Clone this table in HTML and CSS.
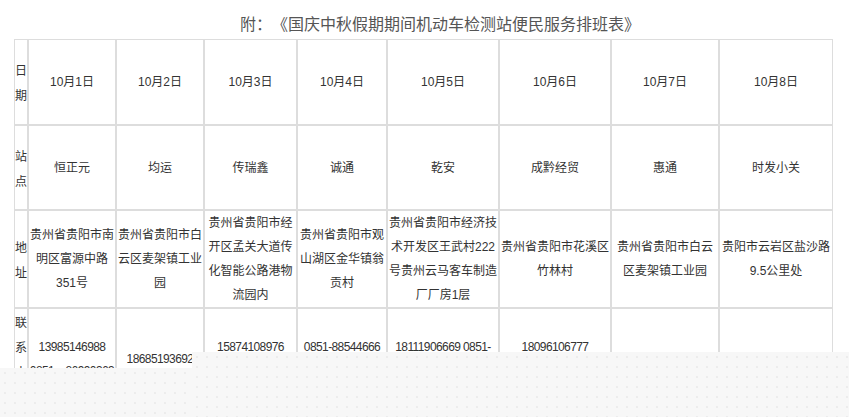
FILE: index.html
```html
<!DOCTYPE html>
<html lang="zh-CN">
<head>
<meta charset="utf-8">
<title>国庆中秋假期期间机动车检测站便民服务排班表</title>
<link rel="stylesheet" href="styles.css">
</head>
<body>
<div class="page">
  <h1 class="title">附：《国庆中秋假期期间机动车检测站便民服务排班表》</h1>
  <table class="schedule">
    <tr class="row-date">
      <td class="c0 head">日期</td>
      <td class="c1">10月1日</td>
      <td class="c2">10月2日</td>
      <td class="c3">10月3日</td>
      <td class="c4">10月4日</td>
      <td class="c5">10月5日</td>
      <td class="c6">10月6日</td>
      <td class="c7">10月7日</td>
      <td class="c8">10月8日</td>
    </tr>
    <tr class="row-site">
      <td class="head">站点</td>
      <td>恒正元</td>
      <td>均运</td>
      <td>传瑞鑫</td>
      <td>诚通</td>
      <td>乾安</td>
      <td>成黔经贸</td>
      <td>惠通</td>
      <td>时发小关</td>
    </tr>
    <tr class="row-addr">
      <td class="head">地址</td>
      <td>贵州省贵阳市南<br>明区富源中路<br>351号</td>
      <td>贵州省贵阳市白<br>云区麦架镇工业<br>园</td>
      <td>贵州省贵阳市经<br>开区孟关大道传<br>化智能公路港物<br>流园内</td>
      <td>贵州省贵阳市观<br>山湖区金华镇翁<br>贡村</td>
      <td>贵州省贵阳市经济技<br>术开发区王武村222<br>号贵州云马客车制造<br>厂厂房1层</td>
      <td>贵州省贵阳市花溪区<br>竹林村</td>
      <td>贵州省贵阳市白云<br>区麦架镇工业园</td>
      <td>贵阳市云岩区盐沙路<br>9.5公里处</td>
    </tr>
    <tr class="row-tel">
      <td class="head">联系电话</td>
      <td><span class="tel">13985146988</span><br><span class="tel">0851－86990363</span></td>
      <td><span class="tel">18685193692</span></td>
      <td><span class="tel">15874108976</span><br><span class="tel">0851-86990121</span></td>
      <td><span class="tel">0851-88544666</span><br><span class="tel">13908502366</span></td>
      <td><span class="tel">18111906669 0851-</span><br><span class="tel">86226888</span></td>
      <td><span class="tel">18096106777</span><br><span class="tel">0851-83869999</span></td>
      <td><span class="tel">13885126688</span></td>
      <td><span class="tel">13608563399</span></td>
    </tr>
  </table>
</div>
<div class="shade shade-right"></div>
<div class="shade shade-left"></div>
</body>
</html>
```

FILE: styles.css
```css
html, body {
  margin: 0;
  padding: 0;
  background: #ffffff;
}

.page {
  padding: 11px 0 0 14px;
}

.title {
  margin: 0 0 4px 0;
  height: 24px;
  padding-left: 26px;
  font-family: "Noto Sans CJK SC", sans-serif;
  font-size: 16px;
  font-weight: normal;
  line-height: 24px;
  color: #555555;
  text-align: center;
  width: 826px;
  box-sizing: border-box;
  white-space: nowrap;
  text-spacing-trim: space-all;
}

.schedule {
  width: 819px;
  table-layout: fixed;
  border-collapse: separate;
  border-spacing: 0;
  font-family: "Liberation Sans", "Noto Sans CJK SC", sans-serif;
  font-size: 12px;
  line-height: 24px;
  color: #333333;
}

.schedule td {
  box-sizing: border-box;
  border: 1px solid #dddddd;
  padding: 0;
  text-align: center;
  vertical-align: middle;
  word-break: break-all;
}

.schedule .c0 { width: 14px; }
.schedule .c1 { width: 88px; }
.schedule .c2 { width: 88px; }
.schedule .c3 { width: 93px; }
.schedule .c4 { width: 90px; }
.schedule .c5 { width: 112px; }
.schedule .c6 { width: 112px; }
.schedule .c7 { width: 108px; }
.schedule .c8 { width: 114px; }

.schedule td.head {
  line-height: 25px;
  text-align: left;
  font-family: "Noto Sans CJK SC", sans-serif;
}

.row-date { height: 86px; }
.row-site { height: 85px; }

.tel {
  letter-spacing: -0.6px;
  white-space: nowrap;
}

.shade {
  position: absolute;
  bottom: 0;
  background-color: #f7f7f7;
  background-image: radial-gradient(circle, #ececec 0.7px, transparent 1px);
  background-size: 10px 10px;
}

.shade-right {
  left: 192px;
  right: 0;
  top: 352px;
}

.shade-left {
  left: 0;
  width: 192px;
  top: 368px;
}
```
